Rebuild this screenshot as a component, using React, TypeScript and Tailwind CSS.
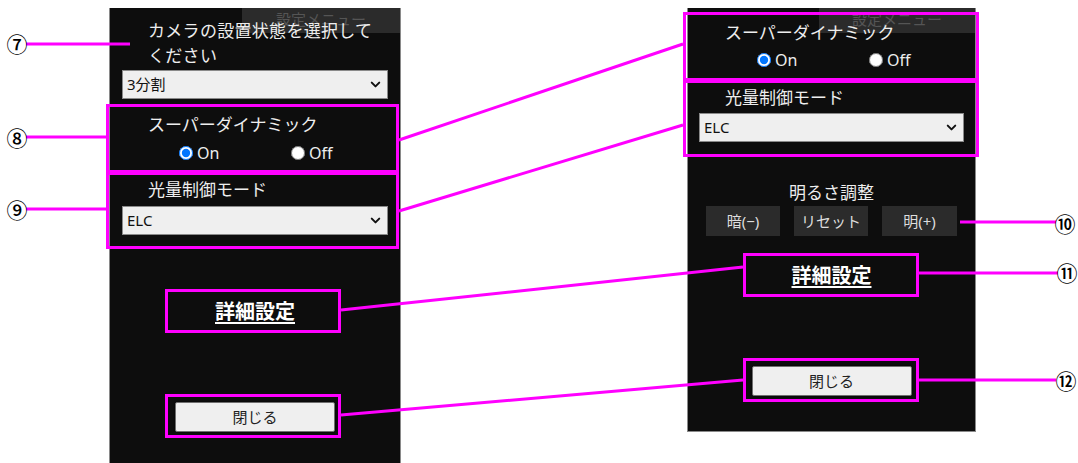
import { ChevronDown } from "lucide-react";

const font = "font-['Noto_Sans','Noto_Sans_CJK_JP',sans-serif]";

const Select = ({ value, className }: { value: string; className?: string }) => (
  <div
    className={`h-[29px] bg-[#efefef] border border-[#8a8a8a] flex items-center justify-between pl-[4px] pr-[4px] text-[15px] text-[#111] ${className ?? ""}`}
  >
    <span>{value}</span>
    <ChevronDown size={15} strokeWidth={3.2} className="text-[#111]" />
  </div>
);

const Radios = ({ className }: { className?: string }) => (
  <div className={`flex items-center h-[20px] text-[16px] text-[#eee] ${className ?? ""}`}>
    <label className="flex items-center gap-[4px] w-[112px]">
      <input type="radio" name={className} defaultChecked className="m-0 w-[14px] h-[14px] accent-[#0075ff]" />
      <span>On</span>
    </label>
    <label className="flex items-center gap-[4px]">
      <input type="radio" name={className} className="m-0 w-[14px] h-[14px]" />
      <span>Off</span>
    </label>
  </div>
);

const Tab = ({ w }: { w: string }) => (
  <div className={`absolute top-0 right-0 ${w} h-[25px] bg-[#2b2b2b] text-[#555] text-[15px] leading-[22px] text-center`}>
    設定メニュー
  </div>
);

const CloseButton = ({ className }: { className?: string }) => (
  <button
    className={`w-[160px] h-[30px] mx-auto bg-[#efefef] border border-[#6f6f6f] rounded-[2px] text-[15px] text-[#222] shadow-[0_0_2px_#000] ${className ?? ""}`}
  >
    閉じる
  </button>
);

const LeftPanel = () => (
  <div className="relative w-[292px] h-[460px] bg-[#0d0d0d] border-x border-[#8a8a8a]">
    <Tab w="w-[158px]" />
    <div className="relative flex flex-col text-[#eee]">
      <p className="mt-[10px] pl-[38px] pr-[16px] text-[17px] tracking-[0.3px] leading-[25px]">
        カメラの設置状態を選択して
        <br />
        ください
      </p>
      <Select value="3分割" className="mt-[2px] mx-[12px]" />
      <p className="mt-[13px] pl-[38px] text-[17px] leading-[25px]">スーパーダイナミック</p>
      <Radios className="mt-[6px] pl-[69px]" />
      <p className="mt-[14px] pl-[38px] text-[17px] leading-[25px]">光量制御モード</p>
      <Select value="ELC" className="mt-[4px] mx-[12px]" />
      <p className="mt-[64px] text-center text-[20px] leading-[25px] font-bold text-white underline underline-offset-[3px]">
        詳細設定
      </p>
      <CloseButton className="mt-[78px]" />
    </div>
  </div>
);

const RightPanel = () => (
  <div className="relative w-[289px] h-[424px] bg-[#0d0d0d] border-x border-b border-[#8a8a8a]">
    <Tab w="w-[156px]" />
    <div className="relative flex flex-col text-[#eee]">
      <p className="mt-[12px] pl-[37px] text-[17px] leading-[25px]">スーパーダイナミック</p>
      <Radios className="mt-[5px] pl-[69px]" />
      <p className="mt-[15px] pl-[37px] text-[17px] leading-[25px]">光量制御モード</p>
      <Select value="ELC" className="mt-[3px] mx-[11px]" />
      <p className="mt-[38px] text-center text-[17px] leading-[25px]">明るさ調整</p>
      <div className="mt-[1px] flex justify-center gap-[14px] text-[15px] text-[#ddd]">
        <button className="w-[74px] h-[30px] bg-[#2b2b2b]">暗(−)</button>
        <button className="w-[74px] h-[30px] bg-[#2b2b2b]">リセット</button>
        <button className="w-[75px] h-[30px] bg-[#2b2b2b]">明(+)</button>
      </div>
      <p className="mt-[27px] text-center text-[20px] leading-[25px] font-bold text-white underline underline-offset-[3px]">
        詳細設定
      </p>
      <CloseButton className="mt-[78px]" />
    </div>
  </div>
);

const callouts = [
  { n: "⑦", x: 17, y: 43 },
  { n: "⑧", x: 17, y: 137 },
  { n: "⑨", x: 17, y: 209 },
  { n: "⑩", x: 1065, y: 223 },
  { n: "⑪", x: 1067, y: 272 },
  { n: "⑫", x: 1066, y: 380 },
];

// magenta annotation boxes, outer edges
const boxes = [
  [106, 104, 399, 173],
  [106, 172, 399, 249],
  [165, 289, 341, 333],
  [165, 394, 341, 438],
  [683, 12, 979, 81],
  [683, 80, 979, 157],
  [743, 253, 919, 297],
  [743, 358, 919, 402],
];

const lines = [
  [26, 44, 130, 44],
  [26, 137, 106, 137],
  [26, 209, 106, 209],
  [399, 140, 683, 44],
  [399, 211, 683, 125],
  [341, 310, 743, 267],
  [341, 415, 743, 380],
  [960, 222, 1056, 222],
  [919, 273, 1058, 273],
  [919, 380, 1056, 380],
];

export default function App() {
  return (
    <div className={`relative w-[1078px] h-[463px] bg-white overflow-hidden ${font}`}>
      <div className="flex pt-[8px] pl-[109px] gap-[286px] items-start">
        <LeftPanel />
        <RightPanel />
      </div>

      <svg className="absolute inset-0 pointer-events-none" width={1078} height={463}>
        {boxes.map(([x1, y1, x2, y2], i) => (
          <rect
            key={i}
            x={x1 + 1.5}
            y={y1 + 1.5}
            width={x2 - x1 - 3}
            height={y2 - y1 - 3}
            fill="none"
            stroke="#ff00ff"
            strokeWidth={3}
          />
        ))}
        {lines.map(([x1, y1, x2, y2], i) => (
          <line key={i} x1={x1} y1={y1} x2={x2} y2={y2} stroke="#ff00ff" strokeWidth={3} />
        ))}
      </svg>

      {callouts.map((c) => (
        <span
          key={c.n}
          className="absolute w-[24px] h-[24px] flex items-center justify-center text-[21px] font-medium leading-none text-black font-['Noto_Sans_CJK_JP',serif]"
          style={{ left: c.x - 12, top: c.y - 12 }}
        >
          {c.n}
        </span>
      ))}
    </div>
  );
}
